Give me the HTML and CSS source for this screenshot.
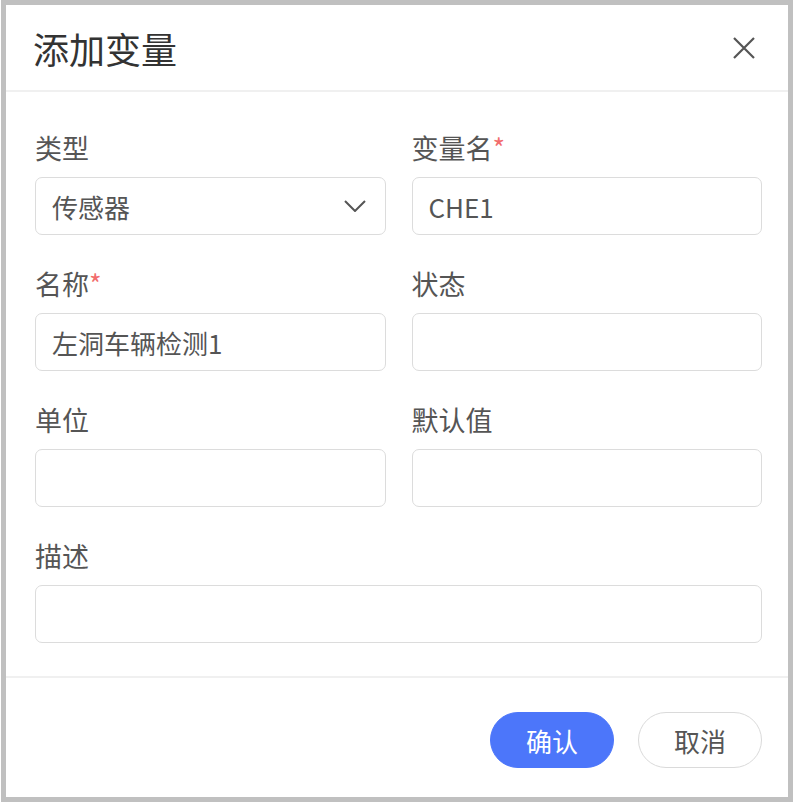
FILE: index.html
```html
<!DOCTYPE html>
<html lang="zh">
<head>
  <meta charset="UTF-8">
  <title>添加变量</title>
  <link rel="stylesheet" href="styles.css">
</head>
<body>

  <div class="dialog">
    <div class="dialog-header">
      <h2>添加变量</h2>
      <button class="close" type="button" aria-label="关闭">
        <svg width="24" height="24" viewBox="0 0 24 24">
          <path d="M2 2 L22 22 M22 2 L2 22" stroke="#555" stroke-width="2.2" fill="none"/>
        </svg>
      </button>
    </div>

    <div class="dialog-body">
      <div class="field">
        <label>类型</label>
        <div class="select">
          <span>传感器</span>
          <svg width="22" height="12" viewBox="0 0 22 12">
            <path d="M1 1 L11 11 L21 1" stroke="#555" stroke-width="2" fill="none"/>
          </svg>
        </div>
      </div>
      <div class="field">
        <label for="varName">变量名<i class="req">*</i></label>
        <input type="text" id="varName" value="CHE1">
      </div>

      <div class="field">
        <label for="name">名称<i class="req">*</i></label>
        <input type="text" id="name" value="左洞车辆检测1">
      </div>
      <div class="field">
        <label for="state">状态</label>
        <input type="text" id="state">
      </div>

      <div class="field">
        <label for="unit">单位</label>
        <input type="text" id="unit">
      </div>
      <div class="field">
        <label for="defVal">默认值</label>
        <input type="text" id="defVal">
      </div>

      <div class="field wide">
        <label for="desc">描述</label>
        <input type="text" id="desc">
      </div>
    </div>

    <div class="dialog-footer">
      <button class="btn primary" type="button">确认</button>
      <button class="btn" type="button">取消</button>
    </div>
  </div>

</body>
</html>
```

FILE: styles.css
```css
body {
  margin: 0;
  font-family: "Noto Sans CJK SC", "Noto Sans", sans-serif;
  color: #555;
  background: #fff;
}

/* 弹窗外框 */
.dialog {
  width: 782px;
  height: 792px;
  margin-left: 1px;
  border: 5px solid #c0c0c0;
  background: #fff;
  display: flex;
  flex-direction: column;
}

.dialog-header {
  height: 85px;
  padding: 0 32px 0 27px;
  display: flex;
  align-items: center;
  justify-content: space-between;
  border-bottom: 2px solid #f0f0f0;
}
.dialog-header h2 {
  margin: 0;
  font-size: 36px;
  font-weight: normal;
  line-height: 40px;
  color: #333;
}
.close {
  border: none;
  background: none;
  padding: 0;
  width: 24px;
  height: 24px;
  display: flex;
}

/* 表单 */
.dialog-body {
  padding: 41px 26px 33px 29px;
  display: grid;
  grid-template-columns: 1fr 1fr;
  column-gap: 26px;
  row-gap: 34px;
  border-bottom: 2px solid #f0f0f0;
}
.field { display: flex; flex-direction: column; }
.field.wide { grid-column: 1 / 3; }
.field label {
  font-size: 27px;
  line-height: 30px;
  margin-bottom: 14px;
  color: #555;
}
.req {
  font-style: normal;
  color: #f26d6d;
}
.field input,
.select {
  box-sizing: border-box;
  height: 58px;
  width: 100%;
  padding: 0 16px;
  border: 1px solid #dcdcdc;
  border-radius: 7px;
  font-family: inherit;
  font-size: 26px;
  color: #555;
  outline: none;
  background: #fff;
}
.select {
  display: flex;
  align-items: center;
  justify-content: space-between;
  padding-right: 19px;
}

/* 底部按钮 */
.dialog-footer {
  padding: 34px 26px 0 0;
  display: flex;
  justify-content: flex-end;
  gap: 24px;
}
.btn {
  width: 124px;
  height: 56px;
  border: 1px solid #dadada;
  border-radius: 28px;
  background: #fff;
  font-family: inherit;
  font-size: 26px;
  color: #555;
}
.btn.primary {
  background: #4c76fa;
  border-color: #4c76fa;
  color: #fff;
}
```
